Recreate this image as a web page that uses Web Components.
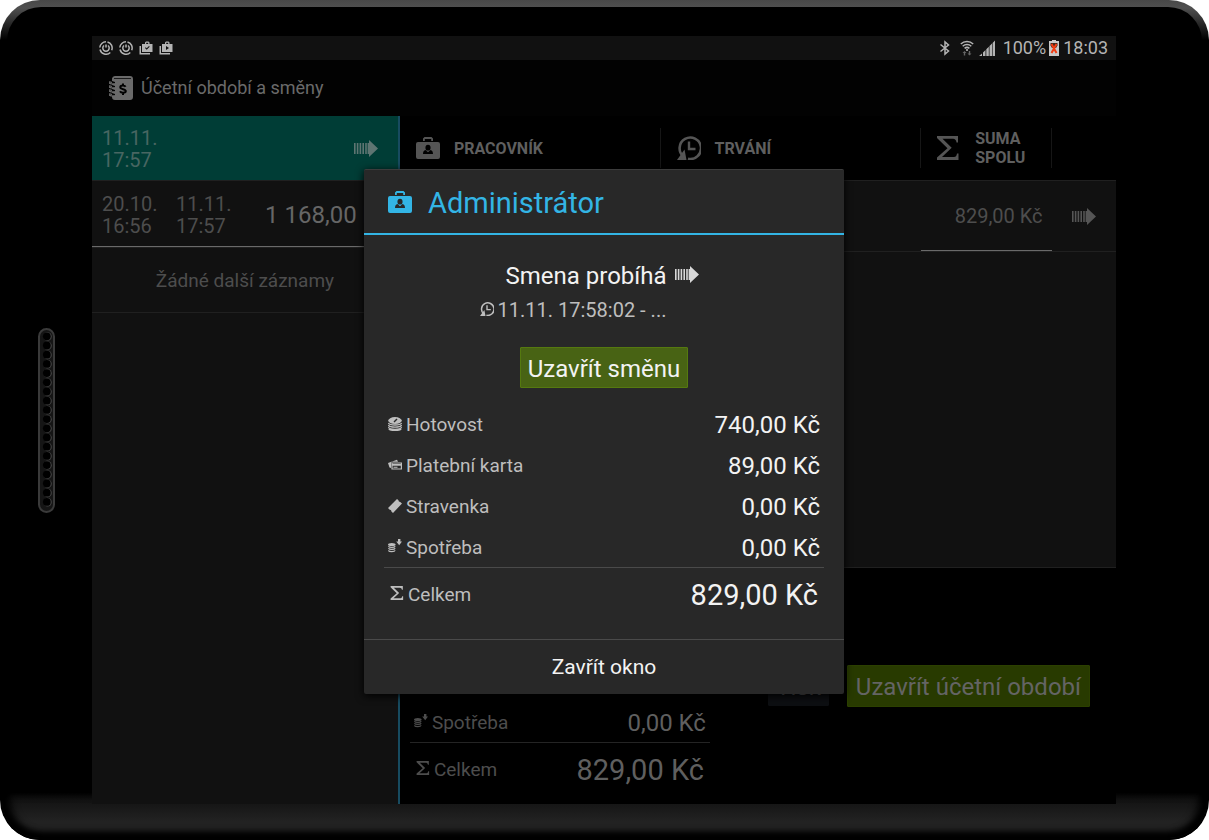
<!DOCTYPE html>
<html lang="cs">
<head>
<meta charset="utf-8">
<title>Účetní období a směny</title>
<style>
body { margin: 0; background: #fff; font-family: Roboto, "Liberation Sans", sans-serif; }
</style>
</head>
<body>
<tablet-frame>
  <shift-app></shift-app>
</tablet-frame>

<script>
const ARROW = '<path fill="currentColor" d="M0 4h1.600v11H0zM2.800 4h1.600v11H2.800zM5.600 4h1.600v11H5.600zM8.400 4H10v11H8.400zM11.200 4h1.600v11h-1.600zM13.600 4H15V1l9 8.500-9 8.500v-3h-1.400z"/>';
const ICONS = {
  arrow: ['0 0 24 19', ARROW],
  ring: ['0 0 14 14', '<g fill="none" stroke="currentColor" stroke-width="1.500"><path d="M8.500 1a6.200 6.200 0 0 1 4.200 8.300M11.300 11.500A6.200 6.200 0 0 1 1 8.500M.8 6.500A6.200 6.200 0 0 1 7 .8"/><path d="M5 4.500a3.200 3.200 0 1 0 4 0"/><path d="M7 3.500v3"/></g>'],
  bagcheck: ['0 0 14 14', '<path fill="currentColor" fill-rule="evenodd" d="M3 3h3V1.500L7 .5h2.500l1 1V3H13.500v8H3zM7.200 3h2V1.800h-2zM6 7l1.700 1.800 3-3.100-.7-.7-2.300 2.300L6.700 6.200z"/><path fill="currentColor" d="M.5 5h1.500v7H11v1.500H.5z"/>'],
  bagplay: ['0 0 14 14', '<path fill="currentColor" fill-rule="evenodd" d="M3 3h3V1.500L7 .5h2.500l1 1V3H13.500v8H3zM7.200 3h2V1.800h-2zM7 5v4l3-2z"/><path fill="currentColor" d="M.5 5h1.500v7H11v1.500H.5z"/>'],
  bluetooth: ['0 0 12 16', '<path fill="none" stroke="currentColor" stroke-width="1.500" d="M1.500 4.500l8 6.500L6 14V2l3.500 3-8 6.500"/>'],
  wifi: ['0 0 14 16', '<g fill="none" stroke="currentColor" stroke-width="1.500"><path d="M.8 4a9 9 0 0 1 12.400 0M2.700 6.300a6.300 6.300 0 0 1 8.600 0M4.600 8.400a3.700 3.700 0 0 1 4.800 0"/></g><circle cx="7" cy="10" r="1.100" fill="currentColor"/><path fill="#666" d="M4.500 11l2 2H5.200v2.500H3.800V13H2.500zM9.500 15.500l-2-2h1.300V11h1.400v2.500h1.300z"/>'],
  signal: ['0 0 16 16', '<path fill="currentColor" d="M0 16l3-2.600V16zM4 12.500l2.500-2.400V16H4zM7.300 9.300L9.800 6.800V16H7.300zM10.500 6L13 3.500V16h-2.500zM13.600 2.900L16 .5V16h-2.400z"/>'],
  battery: ['0 0 10 16', '<path fill="#c8c8c8" d="M3 0h4v1h3v15H0V1h3z"/><path fill="#402a20" d="M1.500 3h7v2.500L7 8h-4L1.500 5.500z"/><path fill="none" stroke="#f23c12" stroke-width="2" d="M2.500 4l5 9M7.500 4l-5 9"/>'],
  book: ['0 0 24 24', '<path fill="currentColor" fill-rule="evenodd" d="M6 0h15a3 3 0 0 1 3 3v18a3 3 0 0 1-3 3H6a3 3 0 0 1-3-3v-1l3-1v-1l-3-1v-1l3-1v-1l-3-1v-1l3-1v-1L3 9V8l3-1V6L3 5V2.500A3 3 0 0 1 6 0zM5 2v.8h17V2z"/><path fill="none" stroke="currentColor" stroke-width="1.200" d="M5 8C1 8 0 7.500 0 6.500S1 5.800 3 6.500M5 12c-4 0-5-.5-5-1.500s1-.7 3 0M5 16c-4 0-5-.5-5-1.500s1-.7 3 0M5 20c-4 0-5-.5-5-1.500s1-.7 3 0"/><path fill="none" stroke="#000" stroke-width="2" d="M16.600 10.700c-1-1.500-5.300-1.600-5.300.6 0 2.500 5.500 1.200 5.500 3.800 0 2.300-4.700 2.300-5.800.2M14 7.500v2M14 17v2"/>'],
  badge: ['0 0 24 22', '<path fill="currentColor" fill-rule="evenodd" d="M2 5h20a2 2 0 0 1 2 2v13a2 2 0 0 1-2 2H2a2 2 0 0 1-2-2V7a2 2 0 0 1 2-2zM12 7.800a2.400 2.700 0 1 0 0 5.800 2.400 2.700 0 1 0 0-5.800zM7 17h10c0-2.500-.8-3.600-2.500-4L12 15.200 9.500 13C7.800 13.400 7 14.500 7 17z"/><path fill="currentColor" d="M7 4V1.500L8.500 0h7L17 1.500V4h-1.800V2H8.800v2z"/>'],
  history: ['0 0 24 24', '<path fill="none" stroke="currentColor" stroke-width="2.600" d="M6.500 20.500A10.700 10.700 0 1 1 11 22.700"/><path fill="none" stroke="currentColor" stroke-width="2.400" d="M12 5.500V13h6.500"/><path fill="currentColor" d="M7.500 13.500L9.500 24H0z"/>'],
  sigma: ['0 0 22 24', '<path fill="currentColor" d="M0 0h21v6.500h-1.500Q19 2.800 16 2.800H5.500l9.200 9L5 21h12q2.500 0 3-3.500h1.500V24H0v-2.500l10.500-9.200L0 2z"/>'],
  coins: ['0 0 14 14', '<ellipse cx="7" cy="3.600" rx="6.800" ry="3.500" fill="currentColor"/><path fill="none" stroke="#282828" stroke-width="1.500" d="M6 5l3-3"/><path fill="none" stroke="currentColor" stroke-width="1.300" d="M.4 5.900c1 2.800 12.200 2.800 13.200 0M.4 8c1 2.800 12.200 2.800 13.200 0M.4 10.200c1 2.800 12.200 2.800 13.200 0M.8 12c1.800 2 10.600 2 12.400 0"/>'],
  cards: ['0 0 14 14', '<path fill="currentColor" d="M0 5l9-3.200 1 2H4L3 5v5L1.500 9.500z"/><path fill="none" stroke="currentColor" stroke-width="1.200" d="M4 5h9.400v6H4z"/><path fill="currentColor" d="M4 6h9.500v1.700H4zM5.500 8.700h4v1h-4z"/>'],
  ticket: ['0 0 14 14', '<path fill="currentColor" d="M0 9l9-9 1.500 1.200q-.2 1.700 1.700 1.700L14 4.500 5 14l-1.600-1.500q0-1.900-1.700-1.700z"/>'],
  spend: ['0 0 14 14', '<ellipse cx="3.800" cy="5.500" rx="3.800" ry="1.600" fill="currentColor"/><path fill="none" stroke="currentColor" stroke-width="1.200" d="M.4 7.300c.6 1.500 6.200 1.500 6.800 0M.4 9.300c.6 1.500 6.200 1.500 6.800 0M.4 11.400c.6 1.500 6.200 1.500 6.800 0"/><path fill="currentColor" d="M10 0h2.400v2.500H14L11.200 6.200 8.200 2.500H10z"/>']
};

class AppIcon extends HTMLElement {
  connectedCallback() {
    const [box, art] = ICONS[this.getAttribute('name')];
    this.attachShadow({ mode: 'open' }).innerHTML = `
      <style>
        :host { display: inline-block; flex: none; width: 24px; height: 24px; }
        svg { display: block; width: 100%; height: 100%; }
      </style>
      <svg viewBox="${box}" aria-hidden="true">${art}</svg>`;
  }
}

class SpeakerGrille extends HTMLElement {
  connectedCallback() {
    let holes = '';
    for (let i = 0; i < 19; i++) {
      const y = 8.5 + i * 9.2;
      holes += `<circle cx="9.500" cy="${y}" r="4.300" fill="#444"/><circle cx="8.800" cy="${y - 0.2}" r="3.900" fill="#000"/>`;
    }
    this.attachShadow({ mode: 'open' }).innerHTML = `
      <style>:host { display: block; } svg { display: block; }</style>
      <svg width="17" height="185" aria-hidden="true">
        <rect x="1" y="1" width="15" height="183" rx="7.500" fill="#151515" stroke="#3a3a3a" stroke-width="2"/>${holes}
      </svg>`;
  }
}

class TabletFrame extends HTMLElement {
  connectedCallback() {
    this.attachShadow({ mode: 'open' }).innerHTML = `
      <style>
        :host {
          display: grid; grid-template-columns: 92px 1fr 93px; box-sizing: border-box;
          min-height: 100vh; padding: 36px 0; position: relative; overflow: hidden;
          border-radius: 40px; background: linear-gradient(#484848, #505050 8px, #000 40px);
        }
        :host::before {
          content: ""; position: absolute; inset: 7px 7px 0; border-radius: 34px 34px 0 0; background: #000;
        }
        .rim {
          position: absolute; left: 2px; right: 2px; bottom: 2px; height: 45px; border-radius: 0 0 38px 38px;
          background: linear-gradient(#0e0e0e, #222 28px);
          box-shadow: inset 0 -6px 6px #000, inset 8px 0 8px #000, inset -8px 0 8px #000;
        }
        speaker-grille { position: relative; place-self: center; }
        slot { display: grid; }
        main { position: relative; display: grid; min-width: 0; }
      </style>
      <div class="rim"></div>
      <speaker-grille></speaker-grille>
      <main><slot></slot></main>`;
  }
}

class StatusBar extends HTMLElement {
  connectedCallback() {
    this.attachShadow({ mode: 'open' }).innerHTML = `
      <style>
        :host {
          display: flex; justify-content: space-between; align-items: center; box-sizing: border-box;
          height: 24px; padding: 0 8px 0 7px; background: #111; color: #b4b4b4; font-size: 18px; line-height: 24px;
        }
        div { display: flex; align-items: center; gap: 6px; }
        .right { gap: 3px; }
        app-icon { width: 14px; height: 14px; }
        .tall { width: 16px; height: 16px; }
        .bt { width: 12px; margin-right: 6px; }
        .wifi { width: 14px; margin-right: 2px; }
        .signal { margin-right: 5px; }
        .bat { width: 10px; margin-right: 1px; }
      </style>
      <div>
        <app-icon name="ring"></app-icon><app-icon name="ring"></app-icon>
        <app-icon name="bagcheck"></app-icon><app-icon name="bagplay"></app-icon>
      </div>
      <div class="right">
        <app-icon class="tall bt" name="bluetooth"></app-icon>
        <app-icon class="tall wifi" name="wifi"></app-icon>
        <app-icon class="tall signal" name="signal"></app-icon>
        <span>100%</span>
        <app-icon class="tall bat" name="battery"></app-icon>
        <time>18:03</time>
      </div>`;
  }
}

class PeriodList extends HTMLElement {
  connectedCallback() {
    this.attachShadow({ mode: 'open' }).innerHTML = `
      <style>
        :host { display: block; background: #111; border-right: 2px solid #174b60; font-size: 20px; line-height: 22px; color: #4d4d4d; min-width: 0; }
        .row {
          display: grid; grid-template-columns: 64px 64px 1fr; column-gap: 10px; align-items: center;
          box-sizing: border-box; height: 65px; padding: 1px 10px 0; border-bottom: 1px solid #202020;
        }
        .active { background: #003d36; color: #486662; }
        .active app-icon { width: 24px; height: 19px; grid-column: 3; justify-self: end; margin-right: 10px; color: #5e7572; }
        .closed { height: 67px; padding-right: 8px; box-shadow: inset 0 -1px #6a6a6a; }
        .sum { justify-self: end; font-size: 24px; line-height: 28px; color: #666; white-space: nowrap; }
        .empty { display: flex; justify-content: center; font-size: 19px; }
      </style>
      <div class="row active">
        <time>11.11.<br>17:57</time>
        <app-icon name="arrow"></app-icon>
      </div>
      <div class="row closed">
        <time>20.10.<br>16:56</time>
        <time>11.11.<br>17:57</time>
        <span class="sum">1 168,00 Kč</span>
      </div>
      <div class="row empty">Žádné další záznamy</div>`;
  }
}

class ShiftTable extends HTMLElement {
  connectedCallback() {
    this.attachShadow({ mode: 'open' }).innerHTML = `
      <style>
        :host { display: block; background: #111; border-bottom: 1px solid #202020; }
        table { width: 100%; table-layout: fixed; border-collapse: separate; border-spacing: 0; }
        .c4 { width: 36.4%; } .c2 { width: 18.2%; }
        th {
          height: 64px; padding: 0; background: #000; border-bottom: 1px solid #202020;
          color: #5f5f5f; font-size: 16px; line-height: 19px; font-weight: 700; text-align: left;
        }
        th div { display: flex; align-items: center; box-sizing: border-box; height: 40px; gap: 14px; padding-left: 16px; border-right: 1px solid #161616; }
        th app-icon { color: #555; }
        .badge { height: 22px; }
        .sigma { width: 22px; margin-right: 2px; }
        td { height: 70px; padding: 0; border-bottom: 1px solid #202020; color: #4d4d4d; font-size: 20px; line-height: 24px; vertical-align: middle; }
        .sum { text-align: right; padding-right: 9px; box-shadow: inset 0 -1px #6a6a6a; }
        .go app-icon { display: block; width: 24px; height: 19px; margin-left: 20px; color: #555; }
      </style>
      <table>
        <colgroup><col class="c4"><col class="c4"><col class="c2"><col></colgroup>
        <thead><tr>
          <th scope="col"><div><app-icon class="badge" name="badge"></app-icon>PRACOVNÍK</div></th>
          <th scope="col"><div><app-icon name="history"></app-icon>TRVÁNÍ</div></th>
          <th scope="col"><div><app-icon class="sigma" name="sigma"></app-icon><span>SUMA<br>SPOLU</span></div></th>
          <th></th>
        </tr></thead>
        <tbody><tr>
          <td></td><td></td><td class="sum">829,00 Kč</td><td class="go"><app-icon name="arrow"></app-icon></td>
        </tr></tbody>
      </table>`;
  }
}

class SumLine extends HTMLElement {
  connectedCallback() {
    this.attachShadow({ mode: 'open' }).innerHTML = `
      <style>
        :host {
          display: flex; align-items: center; box-sizing: border-box; height: 41px; padding: 1px 4px 0;
          font-size: 19px; color: var(--label); line-height: 28px;
        }
        :host([last]) { border-bottom: 1px solid var(--rule); }
        :host([total]) { height: 53px; padding: 0 6px; }
        app-icon { width: 14px; height: 14px; margin: 0 4px 3px 0; }
        .value { margin-left: auto; font-size: 24px; color: var(--value); }
        :host([total]) .value { font-size: 29px; line-height: 36px; }
      </style>
      <app-icon name="${this.getAttribute('icon')}"></app-icon>
      <span><slot></slot></span>
      <span class="value"><slot name="value"></slot></span>`;
  }
}

class GreenButton extends HTMLElement {
  connectedCallback() {
    this.attachShadow({ mode: 'open' }).innerHTML = `
      <style>
        :host { display: inline-block; }
        button {
          display: block; box-sizing: border-box; height: 42px; padding: 1px 8px 0; white-space: nowrap;
          font: 24px/40px Roboto, "Liberation Sans", sans-serif; color: var(--ink, #f3f3f3);
          background: var(--fill, #486314); border: 1px solid var(--edge, #55790f); border-radius: 1px;
        }
        :host([compact]) button { height: 41px; padding: 1px 7px 0; }
      </style>
      <button type="button"><slot></slot></button>`;
  }
}

class PeriodSummary extends HTMLElement {
  connectedCallback() {
    this.attachShadow({ mode: 'open' }).innerHTML = `
      <style>
        :host {
          display: flex; justify-content: space-between; align-items: center; box-sizing: border-box;
          height: 236px; padding: 0 26px 0 10px; background: #000;
          --label: #4d4d4d; --value: #5f5f5f; --rule: #242424; --ink: #646464;
        }
        .sums { width: 300px; align-self: flex-end; padding-bottom: 8px; }
        .actions { display: flex; gap: 18px; --fill: #283a00; --edge: #2c4000; }
        .plain { --fill: #0d0f12; --edge: #0d0f12; }
      </style>
      <div class="sums">
        <sum-line icon="spend" last>Spotřeba<span slot="value">0,00 Kč</span></sum-line>
        <sum-line icon="sigma" total>Celkem<span slot="value">829,00 Kč</span></sum-line>
      </div>
      <div class="actions">
        <green-button class="plain" compact>Tisk</green-button>
        <green-button>Uzavřít účetní období</green-button>
      </div>`;
  }
}

class ShiftDialog extends HTMLElement {
  connectedCallback() {
    this.attachShadow({ mode: 'open' }).innerHTML = `
      <style>
        :host {
          display: block; width: 480px; box-sizing: border-box; background: #282828; border-top: 1px solid #3c3c3c;
          border-radius: 2px; box-shadow: 0 2px 8px #000; color: #f3f3f3;
          --label: #bebebe; --value: #f3f3f3; --rule: #4a4a4a;
        }
        header { display: flex; align-items: center; gap: 16px; height: 63px; padding-left: 24px; border-bottom: 2px solid #33b5e5; color: #33b5e5; }
        header app-icon { height: 22px; }
        h1 { margin: 0; font-size: 29px; line-height: 36px; font-weight: 400; padding-top: 2px; }
        .body { display: flex; flex-direction: column; align-items: center; padding: 25px 20px 18px; }
        .state { display: flex; align-items: center; gap: 8px; margin-right: 4px; font-size: 24px; line-height: 32px; }
        .state app-icon { width: 24px; height: 19px; color: #d8d8d8; margin-bottom: 4px; }
        .since { display: flex; align-items: center; gap: 4px; margin: 6px 62px 25px 0; font-size: 20px; line-height: 24px; color: #bebebe; }
        .since app-icon { width: 14px; height: 14px; margin-bottom: 2px; }
        .sums { align-self: stretch; margin-top: 16px; }
        footer { border-top: 1px solid #4a4a4a; }
        footer button {
          display: block; width: 100%; height: 54px; padding: 0; border: 0; background: none; color: inherit;
          font: 21px/54px Roboto, "Liberation Sans", sans-serif;
        }
      </style>
      <header><app-icon name="badge"></app-icon><h1>Administrátor</h1></header>
      <div class="body">
        <div class="state">Smena probíhá <app-icon name="arrow"></app-icon></div>
        <div class="since"><app-icon name="history"></app-icon>11.11. 17:58:02 - ...</div>
        <green-button compact>Uzavřít směnu</green-button>
        <div class="sums">
          <sum-line icon="coins">Hotovost<span slot="value">740,00 Kč</span></sum-line>
          <sum-line icon="cards">Platební karta<span slot="value">89,00 Kč</span></sum-line>
          <sum-line icon="ticket">Stravenka<span slot="value">0,00 Kč</span></sum-line>
          <sum-line icon="spend" last>Spotřeba<span slot="value">0,00 Kč</span></sum-line>
          <sum-line icon="sigma" total>Celkem<span slot="value">829,00 Kč</span></sum-line>
        </div>
      </div>
      <footer><button type="button">Zavřít okno</button></footer>`;
  }
}

class ShiftApp extends HTMLElement {
  connectedCallback() {
    this.attachShadow({ mode: 'open' }).innerHTML = `
      <style>
        :host { display: flex; flex-direction: column; min-width: 0; background: #000; }
        .window { position: relative; flex: 1; display: flex; flex-direction: column; }
        .bar { display: flex; align-items: center; gap: 8px; height: 56px; padding-left: 17px; background: #020202; color: #6a6a6a; font-size: 18px; line-height: 24px; }
        .panes { flex: 1; display: grid; grid-template-columns: 43fr 100fr; }
        .detail { display: flex; flex-direction: column; min-width: 0; }
        shift-table { flex: 1; }
        .overlay { position: absolute; inset: 0 0 1px; display: grid; place-items: center; }
      </style>
      <status-bar></status-bar>
      <div class="window">
        <div class="bar"><app-icon name="book"></app-icon>Účetní období a směny</div>
        <div class="panes">
          <period-list></period-list>
          <div class="detail"><shift-table></shift-table><period-summary></period-summary></div>
        </div>
        <div class="overlay"><shift-dialog role="dialog" aria-label="Administrátor"></shift-dialog></div>
      </div>`;
  }
}

customElements.define('app-icon', AppIcon);
customElements.define('speaker-grille', SpeakerGrille);
customElements.define('sum-line', SumLine);
customElements.define('green-button', GreenButton);
customElements.define('status-bar', StatusBar);
customElements.define('period-list', PeriodList);
customElements.define('shift-table', ShiftTable);
customElements.define('period-summary', PeriodSummary);
customElements.define('shift-dialog', ShiftDialog);
customElements.define('shift-app', ShiftApp);
customElements.define('tablet-frame', TabletFrame);
</script>
</body>
</html>
